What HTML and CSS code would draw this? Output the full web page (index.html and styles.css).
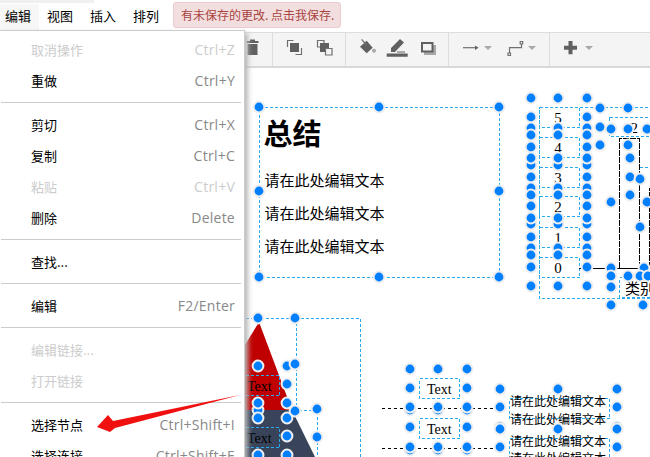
FILE: index.html
```html
<!DOCTYPE html>
<html lang="zh-CN">
<head>
    <meta charset="UTF-8">
    <title>编辑器</title>
    <link rel="stylesheet" href="styles.css">
</head>
<body>
    <!-- Menu bar -->
    <div class="menubar">
        <div class="menubar-item first">编辑</div>
        <div class="menubar-item">视图</div>
        <div class="menubar-item">插入</div>
        <div class="menubar-item">排列</div>
        <div class="save-notice">有未保存的更改. 点击我保存.</div>
    </div>

    <!-- Toolbar -->
    <div class="toolbar">
        <div class="tool-group trash-group">
            <svg class="icon" width="26" height="36" viewBox="0 0 26 36">
                <path d="M1.500 9h12v2h-12zM5 7.500h5V9H5zM2.500 12h10v11h-10z"/>
            </svg>
        </div>
        <div class="tool-group order-group">
            <svg class="icon" width="31" height="36" viewBox="0 0 31 36">
                <path class="outline thin" d="M9.500 15V8.500h6M23.500 16v6.500h-6"/>
                <path d="M12 11h9v9h-9z"/>
            </svg>
            <svg class="icon" width="31" height="36" viewBox="0 0 31 36">
                <path class="outline thin" d="M8.500 8.500h6.500v6.500H8.500z"/>
                <path d="M11 11h9v9h-9z"/>
                <path class="hole outline thin" d="M16.500 16.500h6.500v6.500h-6.500z"/>
            </svg>
        </div>
        <div class="tool-group style-group">
            <svg class="icon" width="31" height="36" viewBox="0 0 31 36">
                <path d="M8 14.700L14.700 8.700 20.700 15.700 14.700 21.300z"/>
                <path class="outline thin" d="M9.700 7.300L14.300 13"/>
                <circle cx="22" cy="18.700" r="2" class="light"/>
            </svg>
            <svg class="icon" width="31" height="36" viewBox="0 0 31 36">
                <path d="M8 20v-4l9-9 4 3.500-9 9.500zM14 19.500h8v1h-8zM3.700 21.500h21v3.300h-21z"/>
            </svg>
            <svg class="icon" width="31" height="36" viewBox="0 0 31 36">
                <path class="light" d="M10 13h12v10H10z"/>
                <path d="M7 10h12.500v10.500H7z"/>
                <path class="hole" d="M9 12h8.500v6.500H9z"/>
            </svg>
        </div>
        <div class="tool-group line-group">
            <svg class="icon" width="44" height="36" viewBox="0 0 44 36">
                <path class="outline thin" d="M7 15.700h13"/>
                <path d="M19 13.500l3.500 2.200-3.500 2.200z"/>
                <path class="light" d="M28 14h8l-4 4z"/>
            </svg>
            <svg class="icon" width="44" height="36" viewBox="0 0 44 36">
                <path class="outline thin" d="M9.500 21V15.700h12V12"/>
                <path class="outline thin" d="M8 21h2.500v2.500H8zM20.200 9.500h2.500V12h-2.500z"/>
                <path class="light" d="M28 14h8l-4 4z"/>
            </svg>
        </div>
        <div class="tool-group insert-group">
            <svg class="icon" width="44" height="36" viewBox="0 0 44 36">
                <path d="M11.500 9h4v4.700H20v4h-4.500v4.600h-4v-4.600H7v-4h4.500z"/>
                <path class="light" d="M28 14h8l-4 4z"/>
            </svg>
        </div>
    </div>

    <!-- Diagram canvas, page coordinates -->
    <svg class="canvas" width="650" height="389" viewBox="0 68 650 389">
        <path class="red" d="M259 322L292 410H240V353z"/>
        <path class="slate" d="M240 410H292L315 457H240z"/>

        <g class="guide">
            <rect x="259.500" y="107.500" width="240" height="170"/>
            <rect x="539.500" y="107.500" width="120" height="190.500"/>
            <rect x="539.500" y="107.500" width="40" height="20"/>
            <rect x="539.500" y="137.500" width="40" height="20"/>
            <rect x="539.500" y="167.500" width="40" height="20"/>
            <rect x="539.500" y="196.500" width="40" height="20"/>
            <rect x="539.500" y="227.500" width="40" height="20"/>
            <rect x="539.500" y="257.500" width="40" height="20"/>
            <rect x="609.500" y="117.500" width="50" height="19"/>
            <rect x="619.500" y="277.500" width="40" height="20"/>
            <path d="M640 167.500h20"/>
            <rect x="240.500" y="318.500" width="120" height="150"/>
            <path d="M296.500 318v92.500h21V457"/>
            <rect x="240.500" y="375.500" width="39" height="20"/>
            <rect x="240.500" y="427.500" width="39" height="20"/>
            <rect x="419.500" y="378.500" width="40" height="20"/>
            <rect x="419.500" y="418.500" width="40" height="20"/>
            <rect x="509.500" y="398.500" width="100" height="20"/>
            <rect x="509.500" y="438.500" width="100" height="30"/>
        </g>

        <path class="axis" d="M579 268h71"/>
        <path class="bar" d="M619.500 268V138.500h20V268M649.500 268V187.500"/>
        <path class="dotted" d="M382 408.500h118M382 448.500h118"/>

        <text class="heading" x="263.500" y="145">总结</text>
        <text class="body" x="264.500" y="186">请在此处编辑文本</text>
        <text class="body" x="264.500" y="219">请在此处编辑文本</text>
        <text class="body" x="264.500" y="252">请在此处编辑文本</text>

        <text class="num" x="558" y="123">5</text>
        <text class="num" x="558" y="153">4</text>
        <text class="num" x="558" y="183">3</text>
        <text class="num" x="558" y="212">2</text>
        <text class="num" x="558" y="243">1</text>
        <text class="num" x="558" y="273">0</text>
        <text class="num" x="630.500" y="133">42</text>
        <text class="label" x="625" y="294">类别</text>

        <text class="serif" x="247" y="391">Text</text>
        <text class="serif" x="247" y="443">Text</text>
        <text class="serif" x="427" y="394">Text</text>
        <text class="serif" x="427" y="434">Text</text>

        <text class="small" x="510" y="406">请在此处编辑文本</text>
        <text class="small" x="510" y="424">请在此处编辑文本</text>
        <text class="small" x="510" y="446">请在此处编辑文本</text>
        <text class="small" x="510" y="463">请在此处编辑文本</text>

        <!-- selection handles -->
        <g class="handles">
            <circle cx="259" cy="107"/><circle cx="379" cy="107"/><circle cx="499" cy="107"/>
            <circle cx="259" cy="191"/><circle cx="499" cy="191"/>
            <circle cx="259" cy="277"/><circle cx="379" cy="277"/><circle cx="499" cy="277"/>

            <circle cx="531" cy="98"/><circle cx="558" cy="98"/><circle cx="587" cy="98"/>
            <circle cx="531" cy="117"/><circle cx="587" cy="117"/>
            <circle cx="531" cy="128"/><circle cx="558" cy="128"/><circle cx="587" cy="128"/>
            <circle cx="531" cy="135"/><circle cx="558" cy="135"/><circle cx="587" cy="135"/>
            <circle cx="531" cy="147"/><circle cx="587" cy="147"/>
            <circle cx="531" cy="165"/><circle cx="558" cy="165"/><circle cx="587" cy="165"/>
            <circle cx="531" cy="158"/><circle cx="558" cy="158"/><circle cx="587" cy="158"/>
            <circle cx="531" cy="177"/><circle cx="587" cy="177"/>
            <circle cx="531" cy="188"/><circle cx="558" cy="188"/><circle cx="587" cy="188"/>
            <circle cx="531" cy="195"/><circle cx="558" cy="195"/><circle cx="587" cy="195"/>
            <circle cx="531" cy="206"/><circle cx="587" cy="206"/>
            <circle cx="531" cy="224"/><circle cx="558" cy="224"/><circle cx="587" cy="224"/>
            <circle cx="531" cy="218"/><circle cx="558" cy="218"/><circle cx="587" cy="218"/>
            <circle cx="531" cy="237"/><circle cx="587" cy="237"/>
            <circle cx="531" cy="248"/><circle cx="558" cy="248"/><circle cx="587" cy="248"/>
            <circle cx="531" cy="255"/><circle cx="558" cy="255"/><circle cx="587" cy="255"/>
            <circle cx="531" cy="267"/><circle cx="587" cy="267"/>
            <circle cx="531" cy="286"/><circle cx="558" cy="286"/><circle cx="587" cy="286"/>

            <circle cx="600" cy="108"/><circle cx="628" cy="108"/>
            <circle cx="600" cy="127"/><circle cx="600" cy="145"/>
            <circle cx="611" cy="129"/><circle cx="628" cy="129"/><circle cx="647" cy="129"/>
            <circle cx="628" cy="145"/><circle cx="630" cy="158"/><circle cx="630" cy="177"/>
            <circle cx="640" cy="179"/><circle cx="630" cy="195"/>
            <circle cx="611" cy="202"/><circle cx="647" cy="202"/><circle cx="640" cy="227"/>
            <circle cx="611" cy="268"/><circle cx="644" cy="268"/>
            <circle cx="611" cy="276"/><circle cx="628" cy="276"/><circle cx="640" cy="276"/><circle cx="648" cy="276"/>
            <circle cx="611" cy="287"/>
            <circle cx="611" cy="305"/><circle cx="643" cy="305"/>

            <circle cx="258" cy="318"/><circle cx="295" cy="318"/>
            <circle cx="258" cy="366"/><circle cx="287" cy="366"/><circle cx="295" cy="364"/>
            <circle cx="287" cy="384"/>
            <circle cx="258" cy="410"/><circle cx="258" cy="403"/><circle cx="287" cy="403"/>
            <circle cx="258" cy="418"/><circle cx="287" cy="418"/>
            <circle cx="295" cy="411"/><circle cx="317" cy="409"/>
            <circle cx="287" cy="436"/><circle cx="317" cy="437"/>
            <circle cx="258" cy="455"/><circle cx="287" cy="455"/>

            <circle cx="410" cy="369"/><circle cx="438" cy="369"/><circle cx="467" cy="369"/>
            <circle cx="410" cy="388"/><circle cx="467" cy="388"/>
            <circle cx="410" cy="410"/><circle cx="438" cy="410"/><circle cx="467" cy="410"/>
            <circle cx="410" cy="407"/><circle cx="438" cy="407"/><circle cx="467" cy="407"/>
            <circle cx="410" cy="427"/><circle cx="467" cy="427"/>
            <circle cx="410" cy="450"/><circle cx="438" cy="450"/><circle cx="467" cy="450"/>
            <circle cx="410" cy="447"/><circle cx="438" cy="447"/><circle cx="467" cy="447"/>

            <circle cx="500" cy="389"/><circle cx="558" cy="389"/><circle cx="617" cy="389"/>
            <circle cx="500" cy="407"/><circle cx="617" cy="407"/>
            <circle cx="500" cy="427"/><circle cx="617" cy="427"/>
            <circle cx="500" cy="429"/><circle cx="558" cy="429"/><circle cx="617" cy="429"/>
            <circle cx="500" cy="447"/><circle cx="617" cy="447"/>
        </g>
    </svg>

    <!-- Edit dropdown -->
    <div class="menu">
        <div class="menu-item disabled"><span>取消操作</span><span class="shortcut">Ctrl+Z</span></div>
        <div class="menu-item"><span>重做</span><span class="shortcut">Ctrl+Y</span></div>
        <div class="menu-sep"></div>
        <div class="menu-item"><span>剪切</span><span class="shortcut">Ctrl+X</span></div>
        <div class="menu-item"><span>复制</span><span class="shortcut">Ctrl+C</span></div>
        <div class="menu-item disabled"><span>粘贴</span><span class="shortcut">Ctrl+V</span></div>
        <div class="menu-item"><span>删除</span><span class="shortcut">Delete</span></div>
        <div class="menu-sep"></div>
        <div class="menu-item"><span>查找...</span></div>
        <div class="menu-sep"></div>
        <div class="menu-item"><span>编辑</span><span class="shortcut">F2/Enter</span></div>
        <div class="menu-sep"></div>
        <div class="menu-item disabled"><span>编辑链接...</span></div>
        <div class="menu-item disabled"><span>打开链接</span></div>
        <div class="menu-sep"></div>
        <div class="menu-item"><span>选择节点</span><span class="shortcut">Ctrl+Shift+I</span></div>
        <div class="menu-item"><span>选择连接</span><span class="shortcut">Ctrl+Shift+E</span></div>
    </div>

    <!-- Red annotation arrow -->
    <svg class="annotation" width="250" height="60" viewBox="0 390 250 60">
        <path d="M240 395L113 421 108 415 97 427 110 432 115 428z"/>
    </svg>
</body>
</html>
```

FILE: styles.css
```css
/* General Page Styling */
html, body {
    height: 100%;
}

body {
    background-color: #ffffff;
    font-family: "Noto Sans CJK SC", sans-serif;
    margin: 0;
    overflow: hidden;
    position: relative;
}

/* Menu Bar */
.menubar {
    background: linear-gradient(#f0f0f0, #f0f0f0) 0 0 / 94px 3px no-repeat;
    display: flex;
    height: 32px;
    box-sizing: border-box;
    font-size: 13px;
}

.menubar-item {
    color: #000000;
    height: 26px;
    line-height: 24px;
    margin-top: 4px;
    padding: 0 9px 0 8px;
}

.menubar-item.first {
    background-color: #f7f7f7;
    padding: 0 8px 0 5px;
}

.save-notice {
    background-color: #f2dede;
    border: 1px solid #ebccd1;
    border-radius: 3px;
    box-sizing: border-box;
    color: #a94442;
    font-size: 12px;
    height: 26px;
    line-height: 24px;
    margin: 2px 0 0 5px;
    padding: 0 7px;
    width: 168px;
    white-space: nowrap;
}

/* Toolbar */
.toolbar {
    background-color: #f4f4f4;
    border-top: 1px solid #dddddd;
    border-bottom: 2px solid #d8d8d8;
    box-sizing: border-box;
    display: flex;
    height: 36px;
    padding-left: 245px;
}

.tool-group {
    align-items: center;
    border-right: 1px solid #dddddd;
    display: flex;
}

.trash-group { width: 27px; }
.order-group { padding-left: 5px; width: 67px; }
.style-group { padding-left: 6px; width: 96px; }
.line-group { padding-left: 7px; width: 93px; }
.insert-group { padding-left: 7px; border-right: none; }

.icon {
    fill: #606060;
    flex: none;
    margin-top: 1px;
}

.icon .outline {
    fill: none;
    stroke: #606060;
    stroke-width: 1.5;
}

.icon .outline.thin {
    stroke: #707070;
    stroke-width: 1.2;
}

.icon .light {
    fill: #a8a8a8;
}

.icon .hole {
    fill: #f4f4f4;
}

/* Diagram Canvas */
.canvas {
    display: block;
    font-family: "Noto Sans CJK SC", sans-serif;
}

.red { fill: #c00000; }
.slate { fill: #39445a; }

.guide {
    fill: none;
    stroke: #29aaf0;
    stroke-dasharray: 3 2;
    shape-rendering: crispEdges;
}

.axis {
    stroke: #000000;
    shape-rendering: crispEdges;
}

.bar {
    fill: none;
    stroke: #000000;
    stroke-dasharray: 6 1;
    shape-rendering: crispEdges;
}

.dotted {
    stroke: #000000;
    stroke-dasharray: 3 3;
    shape-rendering: crispEdges;
}

.heading {
    font-size: 29px;
    font-weight: bold;
}

.body {
    font-size: 15px;
}

.num {
    font-family: "Liberation Serif", serif;
    font-size: 15px;
    text-anchor: middle;
}

.label {
    font-size: 15px;
}

.serif {
    font-family: "Liberation Serif", serif;
    font-size: 14px;
}

.small {
    font-size: 12px;
}

.handles circle {
    r: 5.4px;
    fill: #007fff;
    stroke: #eeeeee;
    stroke-width: 2;
}

/* Edit Dropdown */
.menu {
    background-color: #ffffff;
    border-top: 1px solid #cccccc;
    border-right: 1px solid #cccccc;
    box-shadow: 3px 3px 5px #b8b8b8;
    box-sizing: border-box;
    font-size: 13px;
    height: 440px;
    left: 0;
    padding-top: 4px;
    position: absolute;
    top: 30px;
    width: 245px;
}

.menu-item {
    color: #000000;
    display: flex;
    height: 31px;
    justify-content: space-between;
    line-height: 29px;
    padding: 0 9px 0 31px;
}

.menu-item.disabled,
.menu-item.disabled .shortcut {
    color: #cccccc;
}

.shortcut {
    color: #888888;
    font-family: "Open Sans", sans-serif;
    font-size: 14px;
    letter-spacing: 0.25px;
}

.menu-sep {
    background-color: #cccccc;
    height: 1px;
    margin: 5px 3px 7px 1px;
}

/* Annotation */
.annotation {
    fill: #f01010;
    left: 0;
    position: absolute;
    top: 390px;
}
```
